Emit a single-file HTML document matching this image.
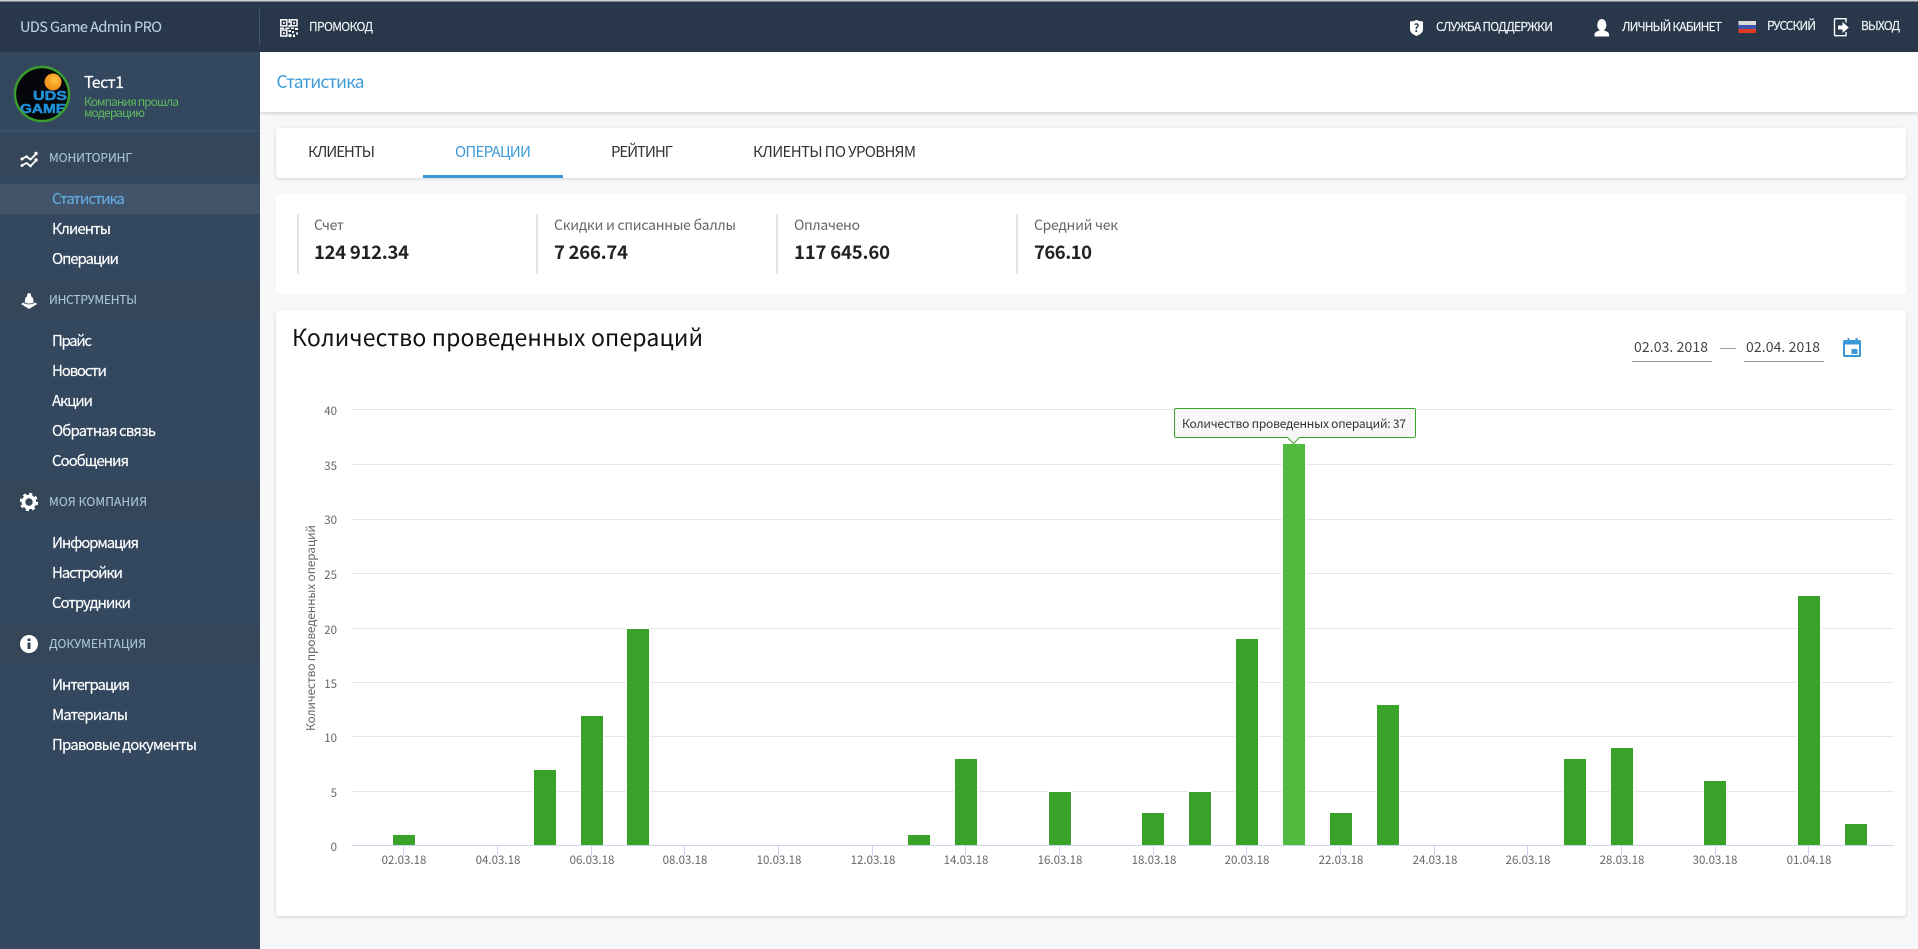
<!DOCTYPE html>
<html lang="ru"><head><meta charset="utf-8"><title>Статистика</title>
<style>
html,body{margin:0;padding:0;width:1918px;height:949px;overflow:hidden;background:#f6f7f9}
.card{position:absolute;left:276px;width:1630px;background:#fff;border-radius:3px;box-shadow:0 1px 3px rgba(0,0,0,.14)}
svg{position:absolute;left:0;top:0}
text{font-family:"Noto Sans CJK SC","Liberation Sans",sans-serif}
.w{fill:#fff;font-size:15px;stroke:#fff;stroke-width:.15}
.h{fill:#f0f4f8;font-size:12px;stroke:#f0f4f8;stroke-width:.15}
.s{fill:#a9c6df;font-size:12px;stroke:#a9c6df;stroke-width:.1}
.x{fill:#666;font-size:11.5px;text-anchor:middle}
.y{fill:#666;font-size:11.5px;text-anchor:end}
.t{fill:#333;font-size:15px}
.l{fill:#666;font-size:14px}
.v{fill:#222;font-size:18.5px;font-weight:700}
.g{stroke:#e6e6e6;stroke-width:1}
.b{fill:#39a229;stroke:#fff;stroke-width:2;paint-order:stroke}
.k{stroke:#ccd6eb;stroke-width:1}
</style></head><body>
<div class="card" style="top:0;left:260px;width:1658px;height:112px;border-radius:0;box-shadow:0 1px 4px rgba(0,0,0,.18)"></div>
<div class="card" style="top:128px;height:50px"></div>
<div class="card" style="top:194px;height:100px;box-shadow:none"></div>
<div class="card" style="top:310px;height:606px"></div>
<svg width="1918" height="949" viewBox="0 0 1918 949" xmlns="http://www.w3.org/2000/svg">
<defs>
<clipPath id="av"><circle cx="42" cy="94" r="26.5"/></clipPath>
<radialGradient id="ball" cx=".6" cy=".4" r=".7"><stop offset="0" stop-color="#ffc23a"/><stop offset="1" stop-color="#ec8416"/></radialGradient>
</defs>

<!-- header -->
<rect x="0" y="0" width="1918" height="52" fill="#283749"/>
<rect x="0" y="0" width="1918" height="1.5" fill="#cfcfcf"/>
<rect x="259" y="9" width="1" height="36" fill="#43566b"/>
<text x="20" y="32" style="fill:#b9d0e5;font-size:14.5px;stroke:#b9d0e5;stroke-width:.1" textLength="142">UDS Game Admin PRO</text>

<!-- QR icon -->
<g fill="none" stroke="#fff" stroke-width="1.5">
<rect x="280.8" y="19.8" width="6" height="6"/><rect x="291" y="19.8" width="6" height="6"/><rect x="280.8" y="30" width="6" height="6"/>
</g>
<g fill="#fff">
<rect x="283" y="22" width="1.8" height="1.8"/><rect x="293.2" y="22" width="1.8" height="1.8"/><rect x="283" y="32.2" width="1.8" height="1.8"/>
<rect x="288.5" y="19" width="1.5" height="4"/><rect x="288.5" y="25" width="2" height="2"/><rect x="280" y="27.5" width="4" height="1.5"/>
<rect x="285.5" y="27.5" width="4" height="1.5"/><rect x="291" y="27.5" width="3" height="1.5"/><rect x="295" y="28" width="3" height="2"/>
<rect x="288.5" y="30" width="2.5" height="2"/><rect x="292" y="31" width="2" height="2"/><rect x="288.5" y="34" width="3" height="3"/><rect x="293" y="34.5" width="2" height="2.5"/><rect x="296" y="32.5" width="2" height="2"/>
</g>
<text class="h" x="309" y="31" textLength="64">ПРОМОКОД</text>

<!-- shield -->
<path d="M1410 21.5q3.5 0 6.5-1.5q3 1.5 6.5 1.5v8q0 4-6.5 6.5q-6.5-2.5-6.5-6.5z" fill="#fff"/>
<text x="1416.5" y="32" style="fill:#283749;font-size:11px;font-weight:700;text-anchor:middle">?</text>
<text class="h" x="1436" y="31" textLength="117">СЛУЖБА ПОДДЕРЖКИ</text>

<!-- user -->
<ellipse cx="1601.8" cy="25" rx="4.6" ry="6" fill="#fff"/>
<path d="M1594.5 36.500v-2q0-2.600 5-4h4.600q5 1.400 5 4v2z" fill="#fff"/>
<text class="h" x="1622" y="31" textLength="100">ЛИЧНЫЙ КАБИНЕТ</text>

<!-- flag -->
<rect x="1738.5" y="21" width="17.5" height="4" fill="#dcdcdc"/><rect x="1738.5" y="25" width="17.5" height="4" fill="#3f55b0"/><rect x="1738.5" y="29" width="17.5" height="4" fill="#e23c1e"/>
<text class="h" x="1767" y="30" textLength="49">РУССКИЙ</text>

<!-- exit -->
<path d="M1846 22.500v-3.800h-10.500a1 1 0 0 0-1 1v15a1 1 0 0 0 1 1h10.500v-3.800" fill="none" stroke="#fff" stroke-width="1.4"/>
<path d="M1838 25.500h4.500v-3.500l6.300 5.500-6.300 5.500v-3.500h-4.500z" fill="#fff"/>
<text class="h" x="1861" y="30" textLength="39">ВЫХОД</text>

<!-- sidebar -->
<rect x="0" y="52" width="260" height="897" fill="#33485f"/>
<rect x="0" y="130" width="260" height="2" fill="#3c5167"/>
<g clip-path="url(#av)">
<rect x="14" y="66" width="56" height="56" fill="#04060c"/>
<circle cx="53" cy="82" r="8.500" fill="url(#ball)"/>
<text x="33" y="100" textLength="34" lengthAdjust="spacingAndGlyphs" style="font-family:'Liberation Sans',sans-serif;font-weight:700;font-size:13px;fill:#1f8fd6;stroke:#1f8fd6;stroke-width:.5">UDS</text>
<text x="20" y="113" textLength="46" lengthAdjust="spacingAndGlyphs" style="font-family:'Liberation Sans',sans-serif;font-weight:700;font-size:13px;fill:#1f8fd6;stroke:#1f8fd6;stroke-width:.5">GAME</text>
</g>
<circle cx="42" cy="94" r="27" fill="none" stroke="#3a9d2f" stroke-width="2.400"/>
<text x="84" y="88" style="fill:#fff;font-size:16px;stroke:#fff;stroke-width:.15" textLength="40">Тест1</text>
<text x="84" y="106" style="fill:#5db85c;font-size:12px" textLength="95">Компания прошла</text>
<text x="84" y="117" style="fill:#5db85c;font-size:12px" textLength="61">модерацию</text>

<rect x="0" y="140" width="260" height="36" fill="#354658"/>
<rect x="0" y="282" width="260" height="36" fill="#354658"/>
<rect x="0" y="484" width="260" height="36" fill="#354658"/>
<rect x="0" y="626" width="260" height="36" fill="#354658"/>
<rect x="0" y="184" width="260" height="30" fill="#41546a"/>

<!-- monitoring icon -->
<g fill="none" stroke="#fff" stroke-width="1.800">
<path d="M22 159l4.500-2.500 4 3 5.500-5.500"/><path d="M22 165.500l4.500-2.500 4 3 5.500-5.500"/>
</g>
<g fill="#fff"><circle cx="36" cy="153.500" r="1.700"/><circle cx="36" cy="160" r="1.700"/><circle cx="22" cy="159" r="1.500"/><circle cx="22" cy="165.500" r="1.500"/><circle cx="26.500" cy="156.500" r="1.300"/><circle cx="30.500" cy="166" r="1.300"/></g>
<text class="s" x="49" y="162" textLength="83">МОНИТОРИНГ</text>

<text class="w" x="52" y="204" style="fill:#62a9de;stroke:#62a9de" textLength="73">Статистика</text>
<text class="w" x="52" y="234" textLength="59">Клиенты</text>
<text class="w" x="52" y="264" textLength="67">Операции</text>

<!-- bag icon -->
<path d="M24.800 302.500q-.2-5.500 2.400-6.300v-1.200a1.900 1.900 0 0 1 3.800 0v1.200q2.700.8 2.500 6.300q-4.400 2.300-8.700 0z" fill="#fff"/>
<path d="M21 304l2.300-1.500.9.700q4.800 2.400 9.800 0l.9-.7 2.300 1.500-8.200 5z" fill="#fff"/>
<text class="s" x="49" y="304" textLength="88">ИНСТРУМЕНТЫ</text>

<text class="w" x="52" y="346" textLength="40">Прайс</text>
<text class="w" x="52" y="376" textLength="55">Новости</text>
<text class="w" x="52" y="406" textLength="41">Акции</text>
<text class="w" x="52" y="436" textLength="104">Обратная связь</text>
<text class="w" x="52" y="466" textLength="77">Сообщения</text>

<!-- gear -->
<circle cx="29" cy="502" r="5.500" fill="none" stroke="#fff" stroke-width="3.600"/>
<circle cx="29" cy="502" r="8" fill="none" stroke="#fff" stroke-width="2.400" stroke-dasharray="3.140 3.140"/>
<text class="s" x="49" y="506" textLength="98">МОЯ КОМПАНИЯ</text>

<text class="w" x="52" y="548" textLength="87">Информация</text>
<text class="w" x="52" y="578" textLength="71">Настройки</text>
<text class="w" x="52" y="608" textLength="79">Сотрудники</text>

<!-- info -->
<circle cx="29" cy="644" r="9" fill="#fff"/>
<rect x="27.500" y="638.500" width="3" height="2.500" fill="#354658"/>
<rect x="27.500" y="642.500" width="3" height="6.500" fill="#354658"/>
<text class="s" x="49" y="648" textLength="97">ДОКУМЕНТАЦИЯ</text>

<text class="w" x="52" y="690" textLength="78">Интеграция</text>
<text class="w" x="52" y="720" textLength="76">Материалы</text>
<text class="w" x="52" y="750" textLength="145">Правовые документы</text>

<!-- title -->
<text x="276.500" y="88" style="fill:#3e9bd8;font-size:17.500px" textLength="88">Статистика</text>

<!-- tabs -->
<text class="t" x="308" y="157" textLength="67">КЛИЕНТЫ</text>
<text class="t" x="455" y="157" style="fill:#3e9bd8" textLength="76">ОПЕРАЦИИ</text>
<text class="t" x="611" y="157" textLength="62">РЕЙТИНГ</text>
<text class="t" x="753" y="157" textLength="163">КЛИЕНТЫ ПО УРОВНЯМ</text>
<rect x="423" y="175" width="140" height="3" fill="#3498d8"/>

<!-- stats -->
<rect x="297" y="214" width="2" height="60" fill="#e6e6e6"/>
<rect x="536" y="214" width="2" height="60" fill="#e6e6e6"/>
<rect x="776" y="214" width="2" height="60" fill="#e6e6e6"/>
<rect x="1016" y="214" width="2" height="60" fill="#e6e6e6"/>
<text class="l" x="314" y="230" textLength="30">Счет</text>
<text class="l" x="554" y="230" textLength="182">Скидки и списанные баллы</text>
<text class="l" x="794" y="230" textLength="66">Оплачено</text>
<text class="l" x="1034" y="230" textLength="84">Средний чек</text>
<text class="v" x="314" y="259" textLength="95">124 912.34</text>
<text class="v" x="554" y="259" textLength="74">7 266.74</text>
<text class="v" x="794" y="259" textLength="96">117 645.60</text>
<text class="v" x="1034" y="259" textLength="58">766.10</text>

<!-- chart head -->
<text x="292" y="346" style="fill:#111;font-size:23px" textLength="411">Количество проведенных операций</text>
<text x="1634" y="352" style="fill:#444;font-size:14px" textLength="74">02.03. 2018</text>
<text x="1746" y="352" style="fill:#444;font-size:14px" textLength="74">02.04. 2018</text>
<rect x="1632" y="361" width="80" height="1" fill="#8d99a6"/>
<rect x="1744" y="361" width="80" height="1" fill="#8d99a6"/>
<rect x="1720" y="348" width="16" height="1" fill="#a5a5a5"/>
<path d="M1844.500 340h3v-2h2v2h6v-2h2v2h2a1.500 1.500 0 0 1 1.500 1.500v14a1.500 1.500 0 0 1-1.500 1.500h-15a1.500 1.500 0 0 1-1.500-1.500v-14a1.500 1.500 0 0 1 1.500-1.500z" fill="#3b98d8"/>
<rect x="1845" y="344.500" width="14" height="10.500" fill="#fff"/>
<rect x="1851.500" y="349" width="6" height="5" fill="#3b98d8"/>

<!-- grid -->
<g class="g">
<line class="g" x1="352" x2="1894" y1="409.500" y2="409.500"/>
<line class="g" x1="352" x2="1894" y1="464.500" y2="464.500"/>
<line class="g" x1="352" x2="1894" y1="519.500" y2="519.500"/>
<line class="g" x1="352" x2="1894" y1="573.500" y2="573.500"/>
<line class="g" x1="352" x2="1894" y1="628.500" y2="628.500"/>
<line class="g" x1="352" x2="1894" y1="682.500" y2="682.500"/>
<line class="g" x1="352" x2="1894" y1="736.500" y2="736.500"/>
<line class="g" x1="352" x2="1894" y1="791.500" y2="791.500"/>
</g>

<!-- y labels -->
<text class="y" x="337" y="415">40</text>
<text class="y" x="337" y="470">35</text>
<text class="y" x="337" y="524">30</text>
<text class="y" x="337" y="579">25</text>
<text class="y" x="337" y="634">20</text>
<text class="y" x="337" y="688">15</text>
<text class="y" x="337" y="742">10</text>
<text class="y" x="337" y="797">5</text>
<text class="y" x="337" y="851">0</text>
<text transform="translate(315 731) rotate(-90)" style="fill:#666;font-size:12px" textLength="206">Количество проведенных операций</text>

<!-- bars -->
<rect class="b" x="393" y="835" width="22" height="10"/>
<rect class="b" x="534" y="770" width="22" height="75"/>
<rect class="b" x="581" y="716" width="22" height="129"/>
<rect class="b" x="627" y="629" width="22" height="216"/>
<rect class="b" x="908" y="835" width="22" height="10"/>
<rect class="b" x="955" y="759" width="22" height="86"/>
<rect class="b" x="1049" y="792" width="22" height="53"/>
<rect class="b" x="1142" y="813" width="22" height="32"/>
<rect class="b" x="1189" y="792" width="22" height="53"/>
<rect class="b" x="1236" y="639" width="22" height="206"/>
<rect class="b" x="1283" y="444" width="22" height="401" style="fill:#50bb3f"/>
<rect class="b" x="1330" y="813" width="22" height="32"/>
<rect class="b" x="1377" y="705" width="22" height="140"/>
<rect class="b" x="1564" y="759" width="22" height="86"/>
<rect class="b" x="1611" y="748" width="22" height="97"/>
<rect class="b" x="1704" y="781" width="22" height="64"/>
<rect class="b" x="1798" y="596" width="22" height="249"/>
<rect class="b" x="1845" y="824" width="22" height="21"/>

<!-- axis -->
<line x1="352" x2="1894" y1="845.500" y2="845.500" stroke="#ccd6eb"/>
<g>
<line class="k" x1="403.500" x2="403.500" y1="846" y2="856"/>
<line class="k" x1="497.500" x2="497.500" y1="846" y2="856"/>
<line class="k" x1="591.500" x2="591.500" y1="846" y2="856"/>
<line class="k" x1="684.500" x2="684.500" y1="846" y2="856"/>
<line class="k" x1="778.500" x2="778.500" y1="846" y2="856"/>
<line class="k" x1="872.500" x2="872.500" y1="846" y2="856"/>
<line class="k" x1="965.500" x2="965.500" y1="846" y2="856"/>
<line class="k" x1="1059.500" x2="1059.500" y1="846" y2="856"/>
<line class="k" x1="1153.500" x2="1153.500" y1="846" y2="856"/>
<line class="k" x1="1246.500" x2="1246.500" y1="846" y2="856"/>
<line class="k" x1="1340.500" x2="1340.500" y1="846" y2="856"/>
<line class="k" x1="1434.500" x2="1434.500" y1="846" y2="856"/>
<line class="k" x1="1527.500" x2="1527.500" y1="846" y2="856"/>
<line class="k" x1="1621.500" x2="1621.500" y1="846" y2="856"/>
<line class="k" x1="1715.500" x2="1715.500" y1="846" y2="856"/>
<line class="k" x1="1808.500" x2="1808.500" y1="846" y2="856"/>
</g>
<text class="x" x="404" y="864">02.03.18</text>
<text class="x" x="498" y="864">04.03.18</text>
<text class="x" x="592" y="864">06.03.18</text>
<text class="x" x="685" y="864">08.03.18</text>
<text class="x" x="779" y="864">10.03.18</text>
<text class="x" x="873" y="864">12.03.18</text>
<text class="x" x="966" y="864">14.03.18</text>
<text class="x" x="1060" y="864">16.03.18</text>
<text class="x" x="1154" y="864">18.03.18</text>
<text class="x" x="1247" y="864">20.03.18</text>
<text class="x" x="1341" y="864">22.03.18</text>
<text class="x" x="1435" y="864">24.03.18</text>
<text class="x" x="1528" y="864">26.03.18</text>
<text class="x" x="1622" y="864">28.03.18</text>
<text class="x" x="1715" y="864">30.03.18</text>
<text class="x" x="1809" y="864">01.04.18</text>

<!-- tooltip -->
<path d="M1176 408.500h238a1.500 1.500 0 0 1 1.500 1.500v26a1.500 1.500 0 0 1-1.500 1.500h-114.500l-6 6-6-6h-111.500a1.500 1.500 0 0 1-1.500-1.500v-26a1.500 1.500 0 0 1 1.500-1.500z" fill="#f7f7f7" stroke="#3aa52c"/>
<text x="1182" y="428" style="fill:#333;font-size:12px" textLength="224">Количество проведенных операций: 37</text>
</svg>
</body></html>
